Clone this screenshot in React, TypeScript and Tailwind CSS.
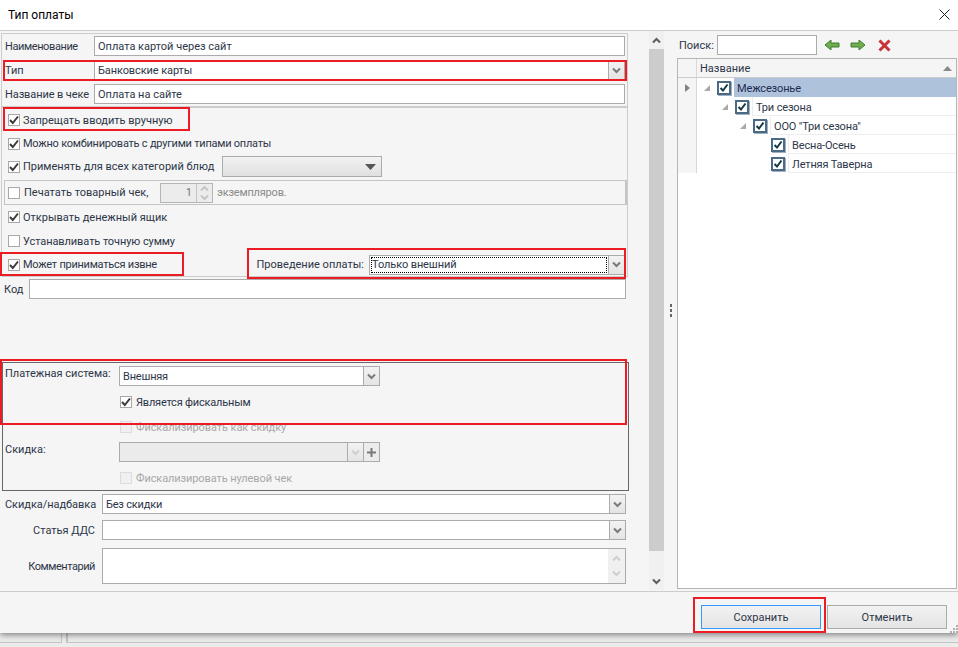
import React from 'react';

const field = 'border border-[#ababab] bg-white h-[20px] flex items-center pl-[3px] text-[#2d3648]';

function Chevron({ up = false, color = '#7a7a7a' }: { up?: boolean; color?: string }) {
  return (
    <svg width="9" height="7" viewBox="0 0 9 7" className={up ? 'rotate-180' : ''}>
      <path d="M1 1.5 L4.5 5 L8 1.5" fill="none" stroke={color} strokeWidth="2" />
    </svg>
  );
}

function Check({ on = false, off = false }: { on?: boolean; off?: boolean }) {
  return (
    <span className={`w-[12px] h-[12px] shrink-0 border flex items-center justify-center ${off ? 'border-[#dcdcdc] bg-[#f0f0f0]' : 'border-[#a8a8a8] bg-white'} ${on ? 'bg-[#f0f0f0]' : ''}`}>
      {on && (
        <svg width="10" height="10" viewBox="0 0 10 10">
          <path d="M1 5 L3.8 8 L9 1.5" fill="none" stroke="#3a3a3a" strokeWidth="2" />
        </svg>
      )}
    </span>
  );
}

function CheckRow({ label, on = false, h, tr = '' }: { label: string; on?: boolean; h: string; tr?: string }) {
  return (
    <div className={`flex items-center pl-[6px] gap-[3px] ${h}`}>
      <Check on={on} />
      <span className={tr}>{label}</span>
    </div>
  );
}

function DropButton({ disabled = false }: { disabled?: boolean }) {
  return (
    <span className="w-[16px] h-full shrink-0 border-l border-[#ababab] bg-gradient-to-b from-[#f2f2f2] to-[#e4e4e4] flex items-center justify-center">
      <Chevron color={disabled ? '#cfcfcf' : '#7a7a7a'} />
    </span>
  );
}

function TreeCheck() {
  return (
    <span className="w-[14px] h-[14px] shrink-0 border-2 border-[#4a6a85] bg-white flex items-center justify-center shadow-[1px_1px_0_#9fb0c0]">
      <svg width="10" height="10" viewBox="0 0 10 10">
        <path d="M1.5 5 L4 7.5 L8.5 1.5" fill="none" stroke="#123a44" strokeWidth="2" />
      </svg>
    </span>
  );
}

const treeRows = [
  { name: 'Межсезонье', pl: 'pl-[7px]', arrow: true, selected: true },
  { name: 'Три сезона', pl: 'pl-[25px]', arrow: true, selected: false },
  { name: 'ООО "Три сезона"', pl: 'pl-[43px]', arrow: true, selected: false },
  { name: 'Весна-Осень', pl: 'pl-[61px]', arrow: false, selected: false },
  { name: 'Летняя Таверна', pl: 'pl-[61px]', arrow: false, selected: false },
];

function TreeRow({ name, pl, arrow, selected }: { name: string; pl: string; arrow: boolean; selected: boolean }) {
  return (
    <div className={`h-[19px] flex items-center ${pl}`}>
      <span className="w-[6px] h-[6px] shrink-0">
        {arrow && (
          <svg width="6" height="6" viewBox="0 0 6 6">
            <path d="M6 0 L6 6 L0 6 Z" fill="#a9a9a9" />
          </svg>
        )}
      </span>
      <span className="ml-[7px]">
        <TreeCheck />
      </span>
      <span className={`ml-[3px] flex-1 h-full flex items-center pl-[3px] tracking-[-0.15px] ${selected ? 'pt-[1px] bg-[#aec2dc] text-[#1c2c50]' : 'pt-[2px] border-l border-b border-[#eeeeee]'}`}>
        {name}
      </span>
    </div>
  );
}

function RedBox({ pos }: { pos: string }) {
  return <div className={`absolute border-2 border-[#ed1c24] pointer-events-none z-20 ${pos}`} />;
}

export default function App() {
  return (
    <div className="relative w-[958px] h-[647px] overflow-hidden bg-[#ececec] text-[11px] leading-none text-[#2d3648] font-['Roboto','Noto_Sans',sans-serif]">
      <div className="relative z-10 h-[633px] flex flex-col bg-[#f5f5f5] shadow-[0_2px_6px_rgba(0,0,0,0.45)]">
        {/* заголовок */}
        <div className="h-[30px] shrink-0 bg-white flex items-center justify-between pl-[8px] pr-[8px] text-[12px] text-black">
          <span>Тип оплаты</span>
          <svg width="11" height="11" viewBox="0 0 11 11" className="mb-[1px]">
            <path d="M0.5 0.5 L10.5 10.5 M10.5 0.5 L0.5 10.5" stroke="#222" strokeWidth="1" />
          </svg>
        </div>

        <div className="flex-1 flex border-t border-[#cccccc] min-h-0">
          {/* форма */}
          <div className="w-[649px] shrink-0 pl-[1px]">
            <div className="w-[627px] mt-[2px] border border-[#cccccc] h-[244px]">
              <div className="pl-[3px] pt-[2px] flex flex-col gap-[4px]">
                <div className="flex items-center">
                  <span className="w-[89px] tracking-[-0.4px]">Наименование</span>
                  <div className={`${field} w-[531px]`}>Оплата картой через сайт</div>
                </div>
                <div className="flex items-center">
                  <span className="w-[89px]">Тип</span>
                  <div className={`${field} w-[531px] pr-0 justify-between`}>
                    <span className="tracking-[-0.1px]">Банковские карты</span>
                    <DropButton />
                  </div>
                </div>
                <div className="flex items-center">
                  <span className="w-[89px] tracking-[-0.1px] whitespace-nowrap">Название в чеке</span>
                  <div className={`${field} w-[531px]`}>Оплата на сайте</div>
                </div>
              </div>
              <div className="h-[2px] mt-[2px] bg-[#cccccc]" />
              <CheckRow label="Запрещать вводить вручную" on h="h-[24px]" />
              <CheckRow label="Можно комбинировать с другими типами оплаты" on h="h-[23px]" tr="tracking-[-0.23px]" />
              <div className="flex items-center">
                <CheckRow label="Применять для всех категорий блюд" on h="h-[23px]" />
                <div className="ml-auto mr-[245px] w-[160px] h-[21px] border border-[#ababab] bg-gradient-to-b from-[#f2f2f2] to-[#e0e0e0] flex items-center justify-end pr-[5px]">
                  <svg width="11" height="6" viewBox="0 0 11 6">
                    <path d="M0 0 H11 L5.5 6 Z" fill="#555555" />
                  </svg>
                </div>
              </div>
              <div className="mt-[2px] ml-[2px] h-[25px] border border-[#c4c4c4] border-r-2 flex items-center pl-[3px] text-[#8a8a8a]">
                <Check />
                <span className="ml-[4px] text-[#2d3648]">Печатать товарный чек,</span>
                <span className="ml-auto mr-[338px] flex items-center">
                  <div className="w-[53px] h-[20px] border border-[#b5b5b5] bg-[#ececec] flex items-center justify-end">
                    <span className="mr-[4px] text-[#777777]">1</span>
                    <span className="w-[16px] h-full border-l border-[#c4c4c4] flex flex-col items-center justify-center gap-[2px]">
                      <Chevron up color="#c4c4c4" />
                      <Chevron color="#c4c4c4" />
                    </span>
                  </div>
                  <span className="ml-[4px] w-[70px] tracking-[-0.2px]">экземпляров.</span>
                </span>
              </div>
              <CheckRow label="Открывать денежный ящик" on h="h-[24px]" />
              <CheckRow label="Устанавливать точную сумму" h="h-[24px]" tr="tracking-[-0.08px]" />
              <div className="flex items-center">
                <CheckRow label="Может приниматься извне" on h="h-[23px]" tr="tracking-[-0.25px]" />
                <span className="ml-auto">Проведение оплаты:</span>
                <div className="ml-[5px] mr-[2px] w-[256px] h-[20px] border border-[#ababab] bg-white flex items-center">
                  <span className="flex-1 mx-[1px] h-[16px] border border-dotted border-black flex items-center tracking-[-0.1px]">Только внешний</span>
                  <DropButton />
                </div>
              </div>
            </div>

            <div className="flex items-center mt-[2px] pl-[3px]">
              <span className="w-[25px]">Код</span>
              <div className={`${field} w-[597px]`} />
            </div>

            {/* платёжная система */}
            <div className="mt-[63px] ml-px w-[627px] h-[129px] border border-[#666666]">
              <div className="flex pt-[3px] pl-[2px]">
                <span className="w-[114px] pt-[2px]">Платежная система:</span>
                <div className={`${field} w-[261px] pl-[2px] pr-0 justify-between`}>
                  <span className="tracking-[-0.2px]">Внешняя</span>
                  <DropButton />
                </div>
              </div>
              <div className="flex items-center gap-[4px] h-[16px] mt-[8px] ml-[117px] tracking-[-0.2px]">
                <Check on />
                Является фискальным
              </div>
              <div className="flex items-center gap-[4px] h-[16px] mt-[9px] ml-[117px] text-[#a8a8a8] tracking-[-0.08px]">
                <Check off />
                Фискализировать как скидку
              </div>
              <div className="flex mt-[7px] pl-[2px]">
                <span className="w-[114px] pt-[2px]">Скидка:</span>
                <div className="w-[261px] h-[20px] border border-[#ababab] bg-[#ebebeb] flex justify-end">
                  <DropButton disabled />
                  <span className="w-[16px] h-full border-l border-[#ababab] bg-[#ececec] flex items-center justify-center">
                    <svg width="9" height="9" viewBox="0 0 9 9">
                      <path d="M4.5 0 V9 M0 4.5 H9" stroke="#7a7a7a" strokeWidth="2" />
                    </svg>
                  </span>
                </div>
              </div>
              <div className="flex items-center gap-[4px] h-[16px] mt-[8px] ml-[117px] text-[#a8a8a8] tracking-[-0.1px]">
                <Check off />
                Фискализировать нулевой чек
              </div>
            </div>

            <div className="flex items-center mt-[3px]">
              <span className="w-[94px] pl-[4px] whitespace-nowrap tracking-[-0.05px]">Скидка/надбавка</span>
              <div className={`${field} w-[524px] pr-0 justify-between ml-[7px]`}>
                <span className="tracking-[-0.2px]">Без скидки</span>
                <DropButton />
              </div>
            </div>
            <div className="flex items-center mt-[6px]">
              <span className="w-[94px] text-right">Статья ДДС</span>
              <div className={`${field} w-[524px] pr-0 justify-end ml-[7px]`}>
                <DropButton />
              </div>
            </div>
            <div className="flex items-center mt-[8px]">
              <span className="w-[94px] text-right tracking-[-0.45px]">Комментарий</span>
              <div className="w-[524px] h-[36px] ml-[7px] border border-[#ababab] bg-white flex justify-end">
                <span className="w-[17px] h-full bg-[#f0f0f0] flex flex-col items-center justify-between py-[6px]">
                  <Chevron up color="#cfcfcf" />
                  <Chevron color="#cfcfcf" />
                </span>
              </div>
            </div>
          </div>

          {/* полоса прокрутки */}
          <div className="w-[15px] shrink-0 flex flex-col h-[559px]">
            <div className="h-[18px] bg-[#f0f0f0] flex items-center justify-center">
              <Chevron up color="#5c5c5c" />
            </div>
            <div className="h-[502px] bg-[#cccccc]" />
            <div className="flex-1 bg-[#f0f0f0] flex items-end justify-center pb-[5px]">
              <Chevron color="#5c5c5c" />
            </div>
          </div>

          {/* разделитель */}
          <div className="w-[13px] shrink-0 h-[559px] flex flex-col items-center justify-center gap-[2px]">
            <span className="w-[2px] h-[3px] bg-[#666666]" />
            <span className="w-[2px] h-[3px] bg-[#666666]" />
            <span className="w-[2px] h-[3px] bg-[#666666]" />
          </div>

          {/* дерево */}
          <div className="flex-1 min-w-0 pr-[1px]">
            <div className="h-[27px] flex items-center pl-[2px] pt-[1px]">
              <span className="w-[38px]">Поиск:</span>
              <div className="w-[100px] h-[20px] border border-[#ababab] bg-white" />
              <svg width="16" height="12" viewBox="0 0 16 12" className="ml-[7px]">
                <path d="M1 6 L7 1 V4 H15 V8 H7 V11 Z" fill="#6fae4e" stroke="#3f7d2c" strokeWidth="1" />
              </svg>
              <svg width="16" height="12" viewBox="0 0 16 12" className="ml-[10px]">
                <path d="M15 6 L9 1 V4 H1 V8 H9 V11 Z" fill="#6fae4e" stroke="#3f7d2c" strokeWidth="1" />
              </svg>
              <svg width="13" height="13" viewBox="0 0 13 13" className="ml-[12px]">
                <path d="M1.5 1.5 L11.5 11.5 M11.5 1.5 L1.5 11.5" stroke="#c9343a" strokeWidth="3" />
              </svg>
            </div>
            <div className="h-[531px] border border-[#b5b5b5] bg-white">
              <div className="h-[19px] flex border-b border-[#cccccc] bg-[#f5f5f5]">
                <span className="w-[19px] border-r border-[#d8d8d8]" />
                <span className="flex-1 flex items-center justify-between pl-[3px] pr-[4px] pt-[1px]">
                  Название
                  <svg width="9" height="5" viewBox="0 0 9 5">
                    <path d="M4.5 0 L9 5 H0 Z" fill="#8a8a8a" />
                  </svg>
                </span>
              </div>
              <div className="flex">
                <div className="w-[19px] h-[95px] shrink-0 bg-[#f5f5f5] border-r border-[#d8d8d8] flex justify-center pt-[6px]">
                  <svg width="5" height="8" viewBox="0 0 5 8">
                    <path d="M0 0 L5 4 L0 8 Z" fill="#808080" />
                  </svg>
                </div>
                <div className="flex-1 min-w-0">
                  {treeRows.map((r) => (
                    <TreeRow key={r.name} {...r} />
                  ))}
                </div>
              </div>
            </div>
          </div>
        </div>

        {/* кнопки */}
        <div className="relative h-[42px] shrink-0 border-t border-[#cccccc] flex justify-end gap-[6px] pt-[13px] pr-[11px]">
          <button className="w-[120px] h-[24px] border border-[#3399ff] bg-gradient-to-b from-[#f2f2f2] to-[#e4e4e4] text-[#2d3648]">Сохранить</button>
          <button className="w-[120px] h-[24px] border border-[#ababab] bg-gradient-to-b from-[#f2f2f2] to-[#e4e4e4] text-[#2d3648]">Отменить</button>
          <svg width="8" height="8" viewBox="0 0 8 8" className="absolute right-0 bottom-0">
            <path d="M6 0h2v2H6z M3 3h2v2H3z M6 3h2v2H6z M0 6h2v2H0z M3 6h2v2H3z M6 6h2v2H6z" fill="#b0b0b0" />
          </svg>
        </div>
      </div>

      {/* окно позади */}
      <div className="h-[14px] flex">
        <div className="w-[62px] h-[10px] border-r border-b border-[#c4c4c4]" />
        <div className="w-[3px]" />
        <div className="flex-1 h-[10px] border-l-2 border-b border-[#c4c4c4] ml-[1px]" />
      </div>

      <RedBox pos="left-[3px] top-[60px] w-[624px] h-[21px]" />
      <RedBox pos="left-[3px] top-[107px] w-[187px] h-[24px]" />
      <RedBox pos="left-0 top-[252px] w-[184px] h-[24px]" />
      <RedBox pos="left-[247px] top-[248px] w-[379px] h-[31px]" />
      <RedBox pos="left-0 top-[359px] w-[627px] h-[66px]" />
      <RedBox pos="left-[693px] top-[597px] w-[133px] h-[36px]" />
    </div>
  );
}
